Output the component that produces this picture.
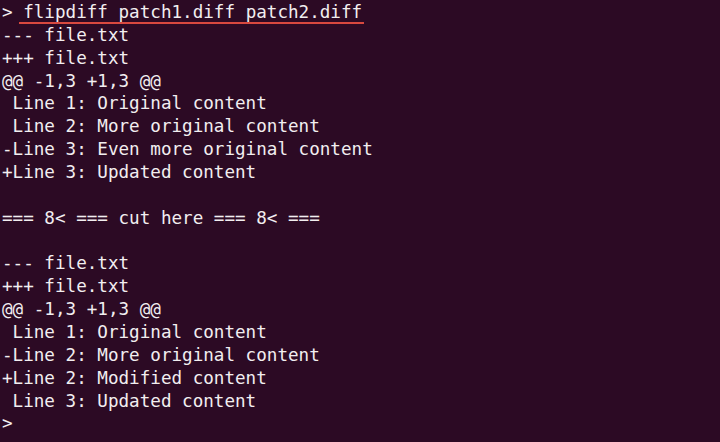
const lines = [
  '--- file.txt',
  '+++ file.txt',
  '@@ -1,3 +1,3 @@',
  ' Line 1: Original content',
  ' Line 2: More original content',
  '-Line 3: Even more original content',
  '+Line 3: Updated content',
  '',
  '=== 8< === cut here === 8< ===',
  '',
  '--- file.txt',
  '+++ file.txt',
  '@@ -1,3 +1,3 @@',
  ' Line 1: Original content',
  '-Line 2: More original content',
  '+Line 2: Modified content',
  ' Line 3: Updated content',
];

export default function App() {
  return (
    <div className="h-[442px] w-[720px] overflow-hidden bg-[#2c0a24] pl-[2px] pt-[1px] font-['DejaVu_Sans_Mono',monospace] text-[17.6px] leading-[22.86px] text-[#f2eef0]">
      <div className="whitespace-pre">
        {'> '}
        <span className="relative">
          flipdiff patch1.diff patch2.diff
          <span className="absolute bottom-[-2px] left-[-4px] right-[-2px] h-[2px] bg-[#d8493f]" />
        </span>
      </div>
      {lines.map((line, i) => (
        <div key={i} className="h-[22.86px] whitespace-pre">
          {line}
        </div>
      ))}
      <div className="whitespace-pre">{'>'}</div>
    </div>
  );
}
